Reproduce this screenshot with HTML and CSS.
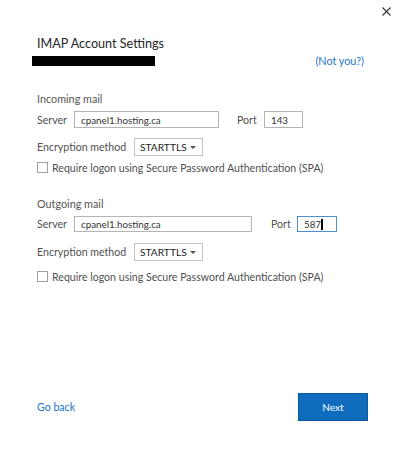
FILE: index.html
```html
<!DOCTYPE html>
<html>
<head>
<meta charset="utf-8">
<link rel="stylesheet" href="styles.css">
</head>
<body>
<div class="dialog">
  <div class="header">
    <svg class="close" width="9" height="9" viewBox="0 0 9 9"><path d="M0.5 0.5 L8.5 8.5 M8.5 0.5 L0.5 8.5" stroke="#333" stroke-width="1.1" fill="none"/></svg>
  </div>
  <div class="title">IMAP Account Settings</div>
  <div class="account">
    <div class="redact"></div>
    <a class="link notyou">(Not you?)</a>
  </div>

  <div class="section first">
    <div class="section-title">Incoming mail</div>
    <div class="row server-row">
      <span class="label server-label">Server</span>
      <div class="input server-in">cpanel1.hosting.ca</div>
      <span class="label port-label">Port</span>
      <div class="input port-in">143</div>
    </div>
    <div class="row enc-row">
      <span class="label enc-label">Encryption method</span>
      <div class="select">STARTTLS<span class="caret"></span></div>
    </div>
    <div class="row check-row">
      <span class="checkbox"></span>
      <span class="label">Require logon using Secure Password Authentication (SPA)</span>
    </div>
  </div>

  <div class="section second">
    <div class="section-title">Outgoing mail</div>
    <div class="row server-row">
      <span class="label server-label">Server</span>
      <div class="input server-in wide">cpanel1.hosting.ca</div>
      <span class="label port-label wide-port">Port</span>
      <div class="input port-in focused">587<span class="cursor"></span></div>
    </div>
    <div class="row enc-row">
      <span class="label enc-label">Encryption method</span>
      <div class="select">STARTTLS<span class="caret"></span></div>
    </div>
    <div class="row check-row">
      <span class="checkbox"></span>
      <span class="label">Require logon using Secure Password Authentication (SPA)</span>
    </div>
  </div>

  <div class="spacer"></div>
  <div class="footer">
    <a class="link goback">Go back</a>
    <button class="next">Next</button>
  </div>
</div>
</body>
</html>
```
FILE: styles.css
```css
html, body {
  margin: 0;
  padding: 0;
  background: #fff;
}
body {
  width: 407px;
  height: 460px;
  overflow: hidden;
  font-family: "Lato", "Noto Sans", sans-serif;
  color: #505050;
}
.dialog {
  display: flex;
  flex-direction: column;
  height: 460px;
  box-sizing: border-box;
  padding-left: 37px;
}
.header {
  display: flex;
  justify-content: flex-end;
  padding: 7px 16px 0 0;
  height: 24px;
  box-sizing: border-box;
}
.close { display: block; }
.title {
  margin-top: 11px;
  font-size: 12.6px;
  line-height: 18px;
  color: #262626;
}
.account {
  display: flex;
  justify-content: space-between;
  align-items: center;
  margin-left: -5px;
  margin-right: 43px;
  margin-top: 1px;
  height: 14px;
}
.redact {
  width: 123px;
  height: 10px;
  background: #000;
}
.link {
  color: #1a73c8;
  font-size: 10.8px;
  line-height: 14px;
}
.section-title {
  font-size: 10.8px;
  line-height: 14px;
  color: #555;
}
.section.first { margin-top: 24px; }
.section.second { margin-top: 24px; }
.row {
  display: flex;
  align-items: center;
}
.label {
  font-size: 10.6px;
  line-height: 14px;
  color: #505050;
  white-space: nowrap;
}
.server-label { width: 37px; }
.enc-label { width: 97px; }
.server-row { margin-top: 5px; height: 17px; }
.second .server-row { height: 16px; }
.input {
  height: 100%;
  box-sizing: border-box;
  border: 1px solid #b4b4b4;
  font-size: 9.8px;
  padding-left: 6px;
  color: #333;
  display: flex;
  align-items: center;
}
.server-in { width: 145px; }
.server-in.wide { width: 178px; }
.port-label { margin-left: 18px; width: 27px; }
.port-label.wide-port { margin-left: 19px; width: 26px; }
.port-in { width: 39px; }
.port-in.focused { border-color: #4f8fd0; width: 40px; }
.cursor {
  display: inline-block;
  width: 1.5px;
  height: 11px;
  background: #000;
}
.enc-row { margin-top: 10px; height: 18px; }
.second .enc-row { margin-top: 11px; }
.select {
  width: 69px;
  height: 18px;
  box-sizing: border-box;
  border: 1px solid #c4c4c4;
  font-size: 10.2px;
  color: #222;
  padding-left: 5px;
  display: flex;
  align-items: center;
}
.caret {
  margin-left: auto;
  margin-right: 6px;
  width: 0;
  height: 0;
  border-left: 3px solid transparent;
  border-right: 3px solid transparent;
  border-top: 3px solid #555;
}
.check-row { margin-top: 6px; height: 11px; }
.second .check-row { margin-top: 10px; }
.checkbox {
  width: 11px;
  height: 11px;
  box-sizing: border-box;
  border: 1px solid #a0a0a0;
  margin-right: 4px;
}
.spacer { flex: 1; }
.footer {
  display: flex;
  justify-content: space-between;
  align-items: center;
  margin-right: 39px;
  margin-bottom: 39px;
}
.goback { font-size: 10.6px; }
.next {
  width: 70px;
  height: 28px;
  background: #0f6cbd;
  border: 1px solid #0a5aa0;
  color: #fff;
  font-family: "Lato", "Noto Sans", sans-serif;
  font-size: 10px;
  padding: 0;
}
```
